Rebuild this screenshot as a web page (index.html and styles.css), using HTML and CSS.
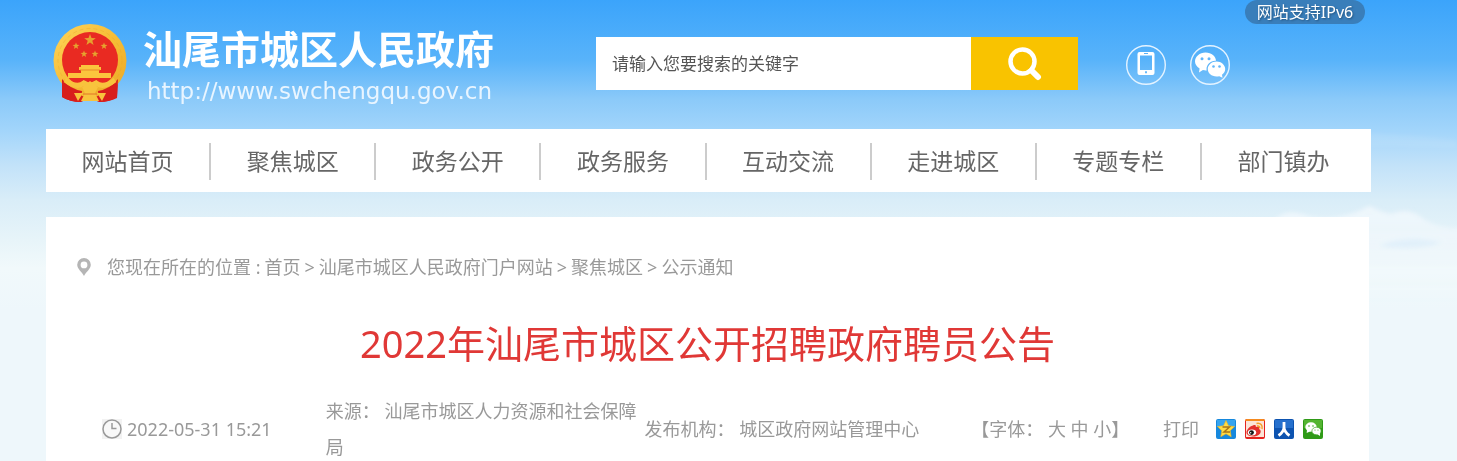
FILE: index.html
```html
<!DOCTYPE html>
<html lang="zh-CN">
<head>
<meta charset="utf-8">
<title>2022年汕尾市城区公开招聘政府聘员公告</title>
<link rel="stylesheet" href="styles.css">
</head>
<body>
<svg class="clouds" viewBox="0 0 400 200" aria-hidden="true">
  <defs>
    <filter id="soft" x="-20%" y="-20%" width="140%" height="140%"><feGaussianBlur stdDeviation="2"/></filter>
    <linearGradient id="fade" x1="0" y1="0" x2="0" y2="1"><stop offset="0" stop-color="#f4f9fd" stop-opacity=".8"/><stop offset=".8" stop-color="#f1f8fc" stop-opacity="0"/></linearGradient>
  </defs>
  <g filter="url(#soft)">
    <path fill="url(#fade)" d="M215 92 Q228 78 245 84 Q262 90 280 87 Q298 84 312 76 Q324 82 334 84 Q352 76 368 90 Q385 100 410 98 V200 H215Z"/>
    <path fill="#d9ebfa" opacity=".6" d="M322 116 Q345 106 372 110 L385 112 Q360 122 322 116Z"/>
    <path fill="#fff" opacity=".08" d="M60 0 Q110 -12 180 6 Q260 -4 400 10 V18 Q200 12 60 8Z"/>
  </g>
</svg>
<div class="page">
  <header class="header">
    <a class="logo" href="#">
      <svg class="emblem" viewBox="0 0 74 80" aria-hidden="true">
        <defs>
          <linearGradient id="gold" x1="0" y1="0" x2="1" y2="1"><stop offset="0" stop-color="#ffd45a"/><stop offset=".5" stop-color="#f6bd36"/><stop offset="1" stop-color="#eaa827"/></linearGradient>
          <path id="star" d="M0-6 1.5-1.9 5.8-1.8 2.3.8 3.6 5 0 2.5-3.6 5-2.3.8-5.8-1.8-1.5-1.9Z"/>
        </defs>
        <path fill="#d81e1c" d="M9 55 C14 60 60 60 65 55 L64 75 Q56 79 46 79 L37 75 28 79 Q17 79 9 74Z"/>
        <circle cx="37" cy="37.500" r="36.500" fill="url(#gold)"/>
        <circle cx="37" cy="37.500" r="32" fill="none" stroke="#e09c25" stroke-width="1" stroke-dasharray="4 3" opacity=".3"/>
        <circle cx="37" cy="37" r="28" fill="#e92a22"/>
        <g fill="#e6a22e"><use href="#star" x="37" y="17"/><use href="#star" transform="translate(23 23) scale(.6)"/><use href="#star" transform="translate(51 23) scale(.6)"/><use href="#star" transform="translate(31 31) scale(.6)"/><use href="#star" transform="translate(42 31) scale(.6)"/></g>
        <path fill="#fbc43d" d="M28 42h18v2h2v3h-2v3h12v5H15v-5h13v-3h-2v-3h2Z"/>
        <path stroke="#e98a2a" stroke-width="1" d="M27 47h20"/>
        <path fill="#d81e1c" d="M9 56 Q17 66 29 68 L28 79 Q17 79 9 74Z M65 56 Q57 66 45 68 L46 79 Q57 79 64 74Z"/>
        <path fill="none" stroke="#f8c33d" stroke-width="5" d="M12 57 Q24 66 31 60 L37 63 43 60 Q50 66 62 57"/>
        <path fill="#f8c33d" d="M37 58 45 64 42 70 46 78H28L32 70 29 64Z M21 70h9l-5 8Z M53 70h-9l5 8Z"/>
        <path fill="none" stroke="#e2742a" stroke-width="1" d="M30 71h14"/>
      </svg>
      <span class="logo-text">
        <span class="site-name">汕尾市城区人民政府</span>
        <span class="site-url">http://www.swchengqu.gov.cn</span>
      </span>
    </a>
    <form class="search">
      <input class="search-input" type="text" placeholder="请输入您要搜索的关键字" aria-label="请输入您要搜索的关键字">
      <button class="search-button" type="button" aria-label="搜索">
        <svg viewBox="0 0 34 34" width="34" height="34" fill="none" stroke="#fff"><circle cx="14.500" cy="14.500" r="12" stroke-width="4.500"/><path d="M23.500 23.500 30 30" stroke-width="6" stroke-linecap="round"/></svg>
      </button>
    </form>
    <nav class="quick" aria-label="快捷入口">
      <a class="round" href="#" aria-label="手机版">
        <svg viewBox="0 0 40 40" width="40" height="40"><circle cx="20" cy="20" r="19.300" fill="none" stroke="#e4f3ff" stroke-width="1.400"/><path fill="#fff" fill-rule="evenodd" d="M13.500 7h13a2 2 0 0 1 2 2v19a2 2 0 0 1-2 2h-13a2 2 0 0 1-2-2V9a2 2 0 0 1 2-2ZM14 10.500v14.500h12V10.500ZM18 8v1h4V8Zm1 18.300v2h2v-2Z"/></svg>
      </a>
      <a class="round" href="#" aria-label="微信">
        <svg viewBox="0 0 40 40" width="40" height="40"><circle cx="20" cy="20" r="19.300" fill="none" stroke="#e4f3ff" stroke-width="1.400"/><path fill="#fff" d="M15.500 7.500c6 0 10.500 4 10.500 8.200-5-.5-9.500 3.500-9.500 8.300 0 .6 0 1 .2 1.400-1.200.1-2.400 0-3.800-.4L9 27.500l.6-4C6.700 21.500 5 19.300 5 16.500c0-5 4.700-9 10.500-9Z"/><path fill="#fff" d="M26.500 16.500c4.900 0 8.700 3.500 8.700 7.600 0 2.500-1.300 4.400-3.200 5.700l.5 3-3.200-1.600c-6.300 1.600-11.500-2.300-11.500-7.100 0-4.100 3.800-7.600 8.700-7.600Z"/><g fill="#62b6fa"><circle cx="12" cy="13.700" r="1.500"/><circle cx="19" cy="13.700" r="1.500"/><circle cx="23.500" cy="21.500" r="1.300"/><circle cx="29.500" cy="21.500" r="1.300"/></g></svg>
      </a>
    </nav>
    <span class="ipv6">网站支持IPv6</span>
  </header>

  <nav class="nav" aria-label="主导航">
    <a href="#">网站首页</a><a href="#">聚焦城区</a><a href="#">政务公开</a><a href="#">政务服务</a><a href="#">互动交流</a><a href="#">走进城区</a><a href="#">专题专栏</a><a href="#">部门镇办</a>
  </nav>

  <main class="content">
    <nav class="crumbs" aria-label="当前位置">
      <svg class="pin" viewBox="0 0 14 18" width="14" height="18" aria-hidden="true"><path fill="#b5b5b5" fill-rule="evenodd" d="M7 0a6.800 6.800 0 0 1 6.800 6.800C13.800 11 9 14 7 18 5 14 .2 11 .2 6.800A6.800 6.800 0 0 1 7 0Zm0 3.500a3.400 3.400 0 1 0 0 6.800 3.400 3.400 0 0 0 0-6.800Z"/></svg>
      <span>您现在所在的位置 :</span>
      <a href="#">首页</a><span>&gt;</span><a href="#">汕尾市城区人民政府门户网站</a><span>&gt;</span><a href="#">聚焦城区</a><span>&gt;</span><a href="#">公示通知</a>
    </nav>
    <h1 class="title">2022年汕尾市城区公开招聘政府聘员公告</h1>
    <div class="meta">
      <span class="date">
        <svg viewBox="0 0 20 20" width="20" height="20" aria-hidden="true"><path fill="#f2f2f2" d="M0 0h20v20H0z"/><circle cx="10" cy="10" r="9" fill="#f8f8f8" stroke="#999" stroke-width="1.500"/><path d="M10 4v5.500h4.500" fill="none" stroke="#999" stroke-width="1.500"/></svg>
        <time datetime="2022-05-31T15:21">2022-05-31 15:21</time>
      </span>
      <span class="source">来源： 汕尾市城区人力资源和社会保障局</span>
      <span>发布机构： 城区政府网站管理中心</span>
      <span>【字体： <a href="#">大</a> <a href="#">中</a> <a href="#">小</a>】</span>
      <a href="#">打印</a>
      <span class="share">
        <a href="#" aria-label="QQ空间"><svg viewBox="0 0 20 20" width="20" height="20"><rect width="20" height="20" rx="2" fill="#1688dd"/><path fill="#36a4ef" d="M1 1h18v7H1z"/><path fill="#ffdc45" stroke="#f4b51c" stroke-width=".6" d="m10 1.500 2.500 5.300 6 .8-4.300 4.100 1 6-5.200-2.900-5.200 2.900 1-6L1.500 7.600l6-.8Z"/><path d="M6.500 8h7L8 13h6" fill="none" stroke="#a87618" stroke-width="1.500"/></svg></a>
        <a href="#" aria-label="新浪微博"><svg viewBox="0 0 20 20" width="20" height="20"><rect width="20" height="20" rx="2" fill="#e5231f"/><path fill="#f58a1f" d="M2 0h16a2 2 0 0 1 2 2H0a2 2 0 0 1 2-2Z"/><path fill="#fce4d7" d="M1 2h18v16H1z"/><path fill="#e2302c" d="M8 6.500c2-1 3.200-.2 2.800 1.500 2.500-.8 4 .2 3.200 2 3.500 1.300 1.700 7.500-6 7.500-5.500 0-8.200-3.200-5.500-7C4 8.500 6 6.800 8 6.500Z"/><ellipse cx="7" cy="13.500" rx="4.200" ry="2.900" fill="#fff"/><circle cx="6.500" cy="13.600" r="2.400" fill="#151515"/><circle cx="5.700" cy="13.800" r=".7" fill="#fff"/><path fill="none" stroke="#f4a02c" stroke-width="1.500" d="M11.500 4.500c4-1 6.500 2 5.500 5.500M12 7c2-.5 3 .8 2.600 2.400"/></svg></a>
        <a href="#" aria-label="人人网"><svg viewBox="0 0 20 20" width="20" height="20"><rect width="20" height="20" rx="2" fill="#0d53b0"/><path fill="#2670cd" d="M1 1h18v8H1z"/><path fill="none" stroke="#fff" stroke-width="2.800" d="M10 3v5c0 4-2.500 6.500-5.500 8.500M10 8c0 4 2.500 6.500 5.500 8.500"/></svg></a>
        <a href="#" aria-label="微信"><svg viewBox="0 0 20 20" width="20" height="20"><rect width="20" height="20" rx="2" fill="#2f9a17"/><path fill="#53b431" d="M1 1h18v8H1z"/><ellipse cx="8" cy="8" rx="5.700" ry="4.700" fill="#fff"/><path fill="#fff" d="m4 10-.3 4L8 12Z"/><ellipse cx="13.500" cy="12" rx="4.600" ry="3.800" fill="#fff" stroke="#3ea522" stroke-width=".7"/><path fill="#fff" d="m14 15 3 2v-3Z"/><g fill="#3ea522"><circle cx="6" cy="7" r=".8"/><circle cx="10" cy="7" r=".8"/><circle cx="12" cy="11" r=".6"/><circle cx="15" cy="11" r=".6"/></g></svg></a>
      </span>
    </div>
  </main>
</div>
</body>
</html>
```
FILE: styles.css
```css
* { box-sizing: border-box; }
body {
  margin: 0;
  min-height: 100vh;
  position: relative;
  background: #eef7fb linear-gradient(#3ba4fb 0, #58b3fa 60px, #8ccaf9 100px, #a0d4fb 128px, #c2e2f9 165px, #d9edf8 200px, #e7f4f9 240px, #f1f9fb 268px, #eef7fb 310px) no-repeat;
  color: #999;
  font: 400 18px/36px "Noto Sans", "Noto Sans CJK SC", sans-serif;
}
a { color: inherit; text-decoration: none; }
svg { display: block; }
.clouds { position: absolute; right: 0; top: 130px; width: 400px; height: 200px; }
.page { position: relative; padding: 0 86px 0 46px; }

.header {
  position: relative;
  display: flex;
  align-items: flex-start;
  height: 129px;
}
.logo { display: flex; flex: 0 0 550px; padding: 23px 0 0 7px; color: #fff; }
.emblem { width: 74px; height: 80px; margin-right: 16px; }
.logo-text { display: flex; flex-direction: column; }
.site-name { font-size: 39px; line-height: 52px; font-weight: 700; }
.site-url { padding-left: 4px; font-family: "DejaVu Sans", sans-serif; font-weight: 400; font-size: 23px; line-height: 32px; color: #e9f5ff; }
.search { display: flex; flex: 0 1 482px; height: 53px; margin-top: 37px; }
.search-input {
  flex: 1;
  min-width: 0;
  padding: 0 16px;
  border: 0;
  border-radius: 0;
  background: #fff;
  color: #555;
  font: inherit;
  font-size: 17px;
}
.search-input::placeholder { color: #555; opacity: 1; }
.search-button {
  display: grid;
  place-items: center;
  width: 107px;
  padding: 0;
  border: 0;
  background: #f9c300;
}
.quick { display: flex; gap: 24px; margin: 45px 0 0 48px; }
.ipv6 {
  position: absolute;
  top: 0;
  right: 6px;
  width: 120px;
  border-radius: 12px;
  background: #397eba;
  color: #fff;
  font-size: 16px;
  line-height: 24px;
  text-align: center;
  text-shadow: 1px 1px 2px #245580;
}

.nav { display: flex; height: 63px; padding: 14px 6px 12px 0; background: #fff; }
.nav a {
  flex: 1;
  color: #666;
  font-size: 23px;
  text-align: center;
}
.nav a + a { border-left: 2px solid #ccc; }

.content { margin: 25px 2px 0 0; padding: 32px 31px 0; background: #fff; }
.crumbs { display: flex; align-items: center; gap: 4px; white-space: nowrap; }
.pin { margin-right: 12px; }
.title {
  margin: 28px 0 20px;
  color: #e03836;
  font-size: 38px;
  font-weight: 400;
  line-height: 60px;
  text-align: center;
}
.meta {
  display: grid;
  grid-template-columns: 224fr 319fr 327fr 192fr 53fr auto;
  align-items: center;
  padding: 0 15px 0 25px;
  white-space: nowrap;
}
.date { display: flex; align-items: center; gap: 5px; }
.source { padding-right: 8px; white-space: normal; }
.share { display: flex; gap: 9px; }
```
